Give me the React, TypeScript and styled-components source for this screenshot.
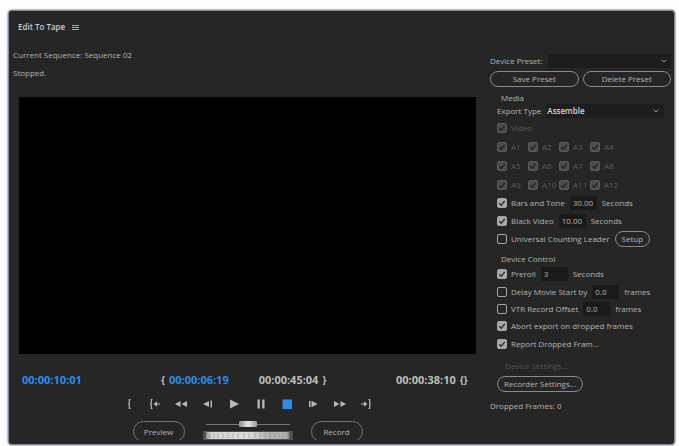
import React from "react";
import styled, { createGlobalStyle } from "styled-components";

const GlobalStyle = createGlobalStyle`
  * { box-sizing: border-box; }
  body {
    margin: 0;
    background: #fdfdfd;
    font-family: "Open Sans", "Noto Sans", sans-serif;
    font-size: 8px;
    line-height: 12px;
    color: #b4b4b4;
  }
  button, input, select { font: inherit; color: inherit; margin: 0; }
`;

const Page = styled.div`
  padding: 10px 4px 1px 8px;
`;

const Panel = styled.main`
  border: 1px solid #85898f;
  border-left-color: #7d8ba3;
  border-radius: 4px;
  box-shadow: 0 0 1px 1px #b9bdc4;
  background: #262626;
  padding: 10px 3px 4px 4px;
`;

const TitleBar = styled.header`
  display: flex;
  align-items: center;
  gap: 7px;
  padding: 0 5px;
  margin-bottom: 16px;
`;

const Title = styled.h1`
  margin: 0;
  font-size: 8px;
  line-height: 12px;
  font-weight: 600;
  color: #cccccc;
`;

const IconButton = styled.button`
  display: flex;
  align-items: center;
  justify-content: center;
  border: 0;
  padding: 0;
  background: none;
  color: #b8b8b8;
`;

const Columns = styled.div`
  display: grid;
  grid-template-columns: minmax(0, 1fr) 181px;
  gap: 8px;
`;

const Monitor = styled.section`
  display: flex;
  flex-direction: column;
`;

const Status = styled.p`
  margin: 0 0 6px;
`;

const Screen = styled.div`
  margin: 12px 6px 0;
  aspect-ratio: 16 / 9;
  background: #000;
`;

const Timecodes = styled.div`
  display: grid;
  grid-template-columns: 139fr 235fr 80fr;
  margin: 18px 6px 0 9px;
  font-size: 11px;
  line-height: 16px;
  font-weight: 700;
`;

const TimeGroup = styled.div`
  display: flex;
  white-space: nowrap;
`;

const Time = styled.span<{ $active?: boolean; $spaced?: boolean }>`
  color: ${(p) => (p.$active ? "#2d8ceb" : "#bdbdbd")};
  margin-right: ${(p) => (p.$spaced ? "30px" : "0")};
`;

const Brace = styled.span`
  padding: 0 4px;
  font-size: 10px;
  color: #bdbdbd;
  &:first-child { padding-left: 0; }
  &:last-child { padding-right: 0; }
`;

const Transport = styled.div`
  display: grid;
  grid-template-columns: repeat(10, 1fr);
  align-self: center;
  width: 264px;
  margin-top: 10px;
`;

const Actions = styled.div`
  display: flex;
  justify-content: center;
  gap: 18px;
  height: 19px;
  margin-top: 11px;
  overflow: hidden;
`;

const Pill = styled.button<{ $grow?: boolean; $tall?: boolean }>`
  flex: ${(p) => (p.$grow ? "1" : "none")};
  height: ${(p) => (p.$tall ? "21px" : "16px")};
  padding: 0 6px;
  border: 1px solid ${(p) => (p.$tall ? "#777777" : "#8a8a8a")};
  border-radius: 11px;
  background: transparent;
  line-height: ${(p) => (p.$tall ? "18px" : "12px")};
  min-width: ${(p) => (p.$tall ? "52px" : "0")};
  white-space: nowrap;
`;

const Shuttle = styled.div`
  width: 90px;
  display: flex;
  flex-direction: column;
  gap: 4px;
`;

const ShuttleSlider = styled.input`
  appearance: none;
  width: 100%;
  height: 6px;
  padding: 0 3px;
  background: linear-gradient(#777777, #777777) center / 84px 1px no-repeat;
  &::-webkit-slider-thumb {
    appearance: none;
    width: 18px;
    height: 6px;
    border-radius: 1px;
    background: linear-gradient(90deg, #8e8e8e, #e6e6e6 50%, #9a9a9a);
  }
`;

const Settings = styled.form`
  margin-top: 4px;
`;

const Row = styled.div<{ $h: number; $inset?: boolean }>`
  display: flex;
  align-items: center;
  gap: 5px;
  height: ${(p) => p.$h}px;
  margin-left: ${(p) => (p.$inset ? "7px" : "0")};
  white-space: nowrap;
`;

const ButtonRow = styled.div`
  display: flex;
  gap: 4px;
  margin-top: 2px;
`;

const Heading = styled.h2`
  margin: 5px 0 0 11px;
  font-size: 8px;
  line-height: 12px;
  font-weight: 400;
`;

const SelectBox = styled.div<{ $strong?: boolean }>`
  flex: 1;
  display: grid;
  align-items: center;
  margin-right: ${(p) => (p.$strong ? "7px" : "0")};
  background: #1d1d1d;
  color: ${(p) => (p.$strong ? "#d6d6d6" : "inherit")};
  font-weight: ${(p) => (p.$strong ? "600" : "400")};
  & > * { grid-area: 1 / 1; }
  & > svg {
    justify-self: end;
    margin-right: ${(p) => (p.$strong ? "5px" : "4px")};
    pointer-events: none;
  }
`;

const Select = styled.select`
  appearance: none;
  width: 100%;
  height: 14px;
  padding: 0 14px 0 1px;
  border: 0;
  background: transparent;
`;

const AudioGrid = styled.div`
  display: grid;
  grid-template-columns: repeat(4, 31px);
  grid-auto-rows: 19px;
  margin-left: 7px;
`;

const CheckLabel = styled.label<{ $muted?: boolean }>`
  display: flex;
  align-items: center;
  gap: 4px;
  white-space: nowrap;
  color: ${(p) => (p.$muted ? "#5c5c5c" : "inherit")};
`;

const CheckBox = styled.span`
  display: grid;
  width: 10px;
  height: 10px;
  & > * { grid-area: 1 / 1; }
  & > svg { pointer-events: none; }
`;

const CheckInput = styled.input`
  appearance: none;
  width: 10px;
  height: 10px;
  border: 1px solid #a6a6a6;
  border-radius: 2px;
  &:checked { background: #a9a9a9; }
  &:disabled { border-color: #5a5a5a; }
  &:checked:disabled { background: #4c4c4c; }
  & + svg { visibility: hidden; }
  &:checked + svg { visibility: visible; }
`;

const NumberField = styled.input`
  width: 27px;
  height: 14px;
  padding: 0 3px 1px;
  border: 0;
  background: #1a1a1a;
`;

const TextButton = styled.button`
  display: block;
  margin: 7px 0 4px 15px;
  padding: 0;
  border: 0;
  background: none;
  line-height: 12px;
  &:disabled { color: #555555; }
`;

const RecorderRow = styled.div`
  display: flex;
  margin: 0 0 8px 7px;
`;

const Dropped = styled.p`
  margin: 0;
`;

function Chevron() {
  return (
    <svg width="6" height="4" viewBox="0 0 6 4" fill="none" stroke="#999" aria-hidden="true">
      <path d="M.5.7 3 3 5.5.7" />
    </svg>
  );
}

function Check({ label, checked, disabled }: { label: string; checked?: boolean; disabled?: boolean }) {
  return (
    <CheckLabel $muted={disabled}>
      <CheckBox>
        <CheckInput type="checkbox" defaultChecked={checked} disabled={disabled} />
        <svg width="10" height="10" viewBox="0 0 10 10" fill="none" aria-hidden="true">
          <path d="M2.3 5.2 4.2 7.2 7.8 2.8" stroke={disabled ? "#222" : "#2a2a2a"} strokeWidth="1.3" />
        </svg>
      </CheckBox>
      {label}
    </CheckLabel>
  );
}

const transport: { name: string; art: React.ReactNode }[] = [
  { name: "Mark In", art: <path d="M7.5 1.5H6.3V5L5.6 6l.7 1v3.5h1.2" fill="none" stroke="currentColor" strokeWidth="1.2" /> },
  {
    name: "Go to In",
    art: (
      <>
        <path d="M3.5 1.5H2.3V5L1.6 6l.7 1v3.5h1.2M6 6h5" fill="none" stroke="currentColor" strokeWidth="1.2" />
        <path d="M4.6 6 8 3.3v5.4z" />
      </>
    ),
  },
  { name: "Rewind", art: <path d="M0 6l5.5-3v6zM6.5 6 12 3v6z" /> },
  { name: "Step Back", art: <path d="M1 6l6-3v6zM8.5 2.5H10v7H8.5z" /> },
  { name: "Play", art: <path d="M2 1.5 11 6l-9 4.5z" /> },
  { name: "Pause", art: <path d="M2.5 1.5h2.3v9H2.5zM7.2 1.5h2.3v9H7.2z" /> },
  { name: "Stop", art: <path d="M1.5 1.5h9.5v9.5H1.5z" fill="#2d8ceb" /> },
  { name: "Step Forward", art: <path d="M2 3h1.5v6H2zM4.5 2.8 10.5 6l-6 3.2z" /> },
  { name: "Fast Forward", art: <path d="M0 3l5.5 3L0 9zM6.5 3 12 6 6.5 9z" /> },
  {
    name: "Go to Out",
    art: (
      <>
        <path d="M8.5 1.5h1.2V5l.7 1-.7 1v3.5H8.5M1 6h5" fill="none" stroke="currentColor" strokeWidth="1.2" />
        <path d="M7.4 6 4 3.3v5.4z" />
      </>
    ),
  },
];

function JogWheel() {
  return (
    <svg width="90" height="9" viewBox="0 0 90 9" role="img" aria-label="Jog wheel">
      <defs>
        <linearGradient id="wheel">
          <stop offset="0" stopColor="#8d8d8d" />
          <stop offset=".06" stopColor="#d4d4d4" />
          <stop offset=".5" stopColor="#dedede" />
          <stop offset=".75" stopColor="#b0b0b0" />
          <stop offset=".96" stopColor="#b4b4b4" />
          <stop offset="1" stopColor="#666" />
        </linearGradient>
      </defs>
      <rect width="90" height="9" fill="#505050" />
      <rect x="3" y="1" width="84" height="7" fill="url(#wheel)" />
      <path
        d="M7 2v5M11 2v5M15 2v5M20 2v5M25 2v5M30 2v5M35 2v5M41 2v5M46 2v5M52 2v5M57 2v5M62 2v5M67 2v5M72 2v5M76 2v5M80 1v7M83 1v7"
        stroke="#888"
        strokeOpacity=".5"
      />
    </svg>
  );
}

export default function App() {
  return (
    <Page>
      <GlobalStyle />
      <Panel>
        <TitleBar>
          <Title>Edit To Tape</Title>
          <IconButton type="button" aria-label="Panel menu">
            <svg width="7" height="7" viewBox="0 0 7 7" stroke="currentColor" aria-hidden="true">
              <path d="M0 1.5h7M0 3.5h7M0 5.5h7" strokeWidth=".9" />
            </svg>
          </IconButton>
        </TitleBar>
        <Columns>
          <Monitor>
            <Status>Current Sequence: Sequence 02</Status>
            <Status>Stopped.</Status>
            <Screen />
            <Timecodes>
              <TimeGroup>
                <Time $active>00:00:10:01</Time>
              </TimeGroup>
              <TimeGroup>
                <Brace>{"{"}</Brace>
                <Time $active $spaced>00:00:06:19</Time>
                <Time>00:00:45:04</Time>
                <Brace>{"}"}</Brace>
              </TimeGroup>
              <TimeGroup>
                <Time>00:00:38:10</Time>
                <Brace>{"{}"}</Brace>
              </TimeGroup>
            </Timecodes>
            <Transport>
              {transport.map((t) => (
                <IconButton key={t.name} type="button" aria-label={t.name}>
                  <svg width="12" height="12" viewBox="0 0 12 12" fill="currentColor" aria-hidden="true">
                    {t.art}
                  </svg>
                </IconButton>
              ))}
            </Transport>
            <Actions>
              <Pill type="button" $tall>Preview</Pill>
              <Shuttle>
                <ShuttleSlider type="range" aria-label="Shuttle" defaultValue={50} />
                <JogWheel />
              </Shuttle>
              <Pill type="button" $tall>Record</Pill>
            </Actions>
          </Monitor>
          <Settings>
            <Row $h={16}>
              <label htmlFor="preset">Device Preset:</label>
              <SelectBox>
                <Select id="preset">
                  <option value="" aria-label="None" />
                </Select>
                <Chevron />
              </SelectBox>
            </Row>
            <ButtonRow>
              <Pill type="button" $grow>Save Preset</Pill>
              <Pill type="button" $grow>Delete Preset</Pill>
            </ButtonRow>
            <Heading>Media</Heading>
            <Row $h={14} $inset>
              <label htmlFor="export">Export Type</label>
              <SelectBox $strong>
                <Select id="export">
                  <option>Assemble</option>
                </Select>
                <Chevron />
              </SelectBox>
            </Row>
            <Row $h={19} $inset>
              <Check label="Video" checked disabled />
            </Row>
            <AudioGrid>
              {Array.from({ length: 12 }, (_, i) => (
                <Check key={i} label={`A${i + 1}`} checked disabled />
              ))}
            </AudioGrid>
            <Row $h={18} $inset>
              <Check label="Bars and Tone" checked />
              <NumberField aria-label="Bars and tone duration" defaultValue="30.00" />
              Seconds
            </Row>
            <Row $h={18} $inset>
              <Check label="Black Video" checked />
              <NumberField aria-label="Black video duration" defaultValue="10.00" />
              Seconds
            </Row>
            <Row $h={18} $inset>
              <Check label="Universal Counting Leader" />
              <Pill type="button">Setup</Pill>
            </Row>
            <Heading>Device Control</Heading>
            <Row $h={18} $inset>
              <Check label="Preroll" checked />
              <NumberField aria-label="Preroll duration" defaultValue="3" />
              Seconds
            </Row>
            <Row $h={17} $inset>
              <Check label="Delay Movie Start by" />
              <NumberField aria-label="Movie start delay" defaultValue="0.0" />
              frames
            </Row>
            <Row $h={17} $inset>
              <Check label="VTR Record Offset" />
              <NumberField aria-label="Record offset" defaultValue="0.0" />
              frames
            </Row>
            <Row $h={18} $inset>
              <Check label="Abort export on dropped frames" checked />
            </Row>
            <Row $h={18} $inset>
              <Check label="Report Dropped Fram..." checked />
            </Row>
            <TextButton type="button" disabled>Device Settings...</TextButton>
            <RecorderRow>
              <Pill type="button">Recorder Settings...</Pill>
            </RecorderRow>
            <Dropped>Dropped Frames: 0</Dropped>
          </Settings>
        </Columns>
      </Panel>
    </Page>
  );
}
